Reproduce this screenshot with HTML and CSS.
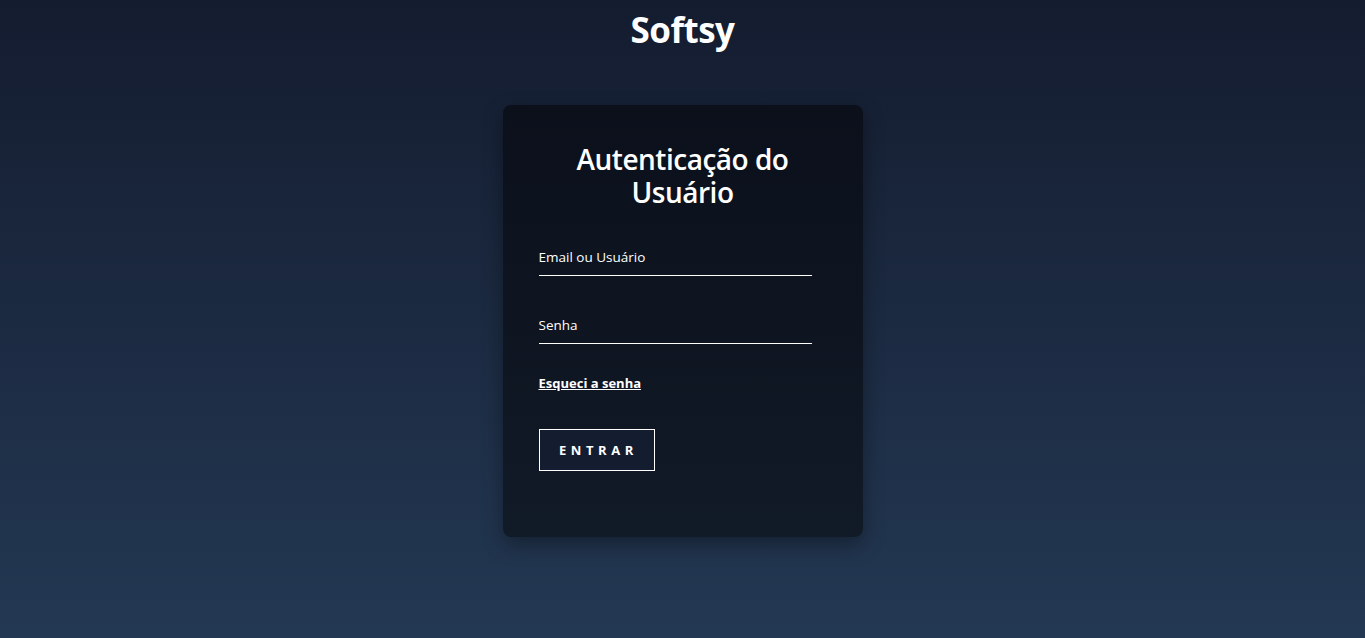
FILE: index.html
```html
<!DOCTYPE html>
<html lang="pt-BR">
<head>
<meta charset="utf-8">
<title>Softsy</title>
<link rel="stylesheet" href="styles.css">
</head>
<body>
<header class="brand">Softsy</header>
<main class="wrap">
  <form class="card">
    <h2 class="card-title">Autenticação do Usuário</h2>
    <label class="field">
      <input type="text" placeholder="Email ou Usuário">
    </label>
    <label class="field">
      <input type="password" placeholder="Senha">
    </label>
    <a class="forgot" href="#">Esqueci a senha</a>
    <button type="button" class="btn">ENTRAR</button>
  </form>
</main>
</body>
</html>
```

FILE: styles.css
```css
* { box-sizing: border-box; }
html, body { height: 100%; }
body {
  margin: 0;
  font-family: "Open Sans", "Noto Sans", sans-serif;
  color: #fff;
  background: linear-gradient(180deg, #141c2f 0%, #233853 100%);
  min-height: 638px;
}
.brand {
  text-align: center;
  font-size: 35px;
  font-weight: 700;
  line-height: 60px;
  letter-spacing: -0.5px;
}
.wrap {
  display: flex;
  justify-content: center;
  padding-top: 45px;
}
.card {
  width: 360px;
  height: 432px;
  padding: 38px 36px 0 36px;
  border-radius: 8px;
  background: linear-gradient(180deg, #0b101b 0%, #111a27 100%);
  box-shadow: 0 8px 20px rgba(0,0,0,0.35);
  display: flex;
  flex-direction: column;
  align-items: flex-start;
}
.card-title {
  align-self: stretch;
  margin: 0 0 31px;
  text-align: center;
  font-size: 28px;
  font-weight: 600;
  line-height: 33px;
  letter-spacing: -0.5px;
  padding: 0 20px;
}
.field {
  display: block;
  width: 273px;
  margin-bottom: 32px;
}
.field input {
  width: 100%;
  background: transparent;
  border: 0;
  border-bottom: 1px solid #fff;
  color: #fff;
  font-family: inherit;
  font-size: 13.5px;
  padding: 8px 0 9px;
  outline: none;
}
.field input::placeholder { color: #fff; opacity: 1; }
.forgot {
  color: #fff;
  font-size: 13px;
  font-weight: 700;
  margin-top: -2px;
  text-decoration: underline;
}
.btn {
  margin-top: 37px;
  width: 116px;
  height: 42px;
  border: 1px solid #fff;
  background: #141c2f;
  color: #fff;
  font-family: inherit;
  font-size: 13px;
  font-weight: 700;
  letter-spacing: 4.6px;
  padding: 0 0 0 4px;
}
```
